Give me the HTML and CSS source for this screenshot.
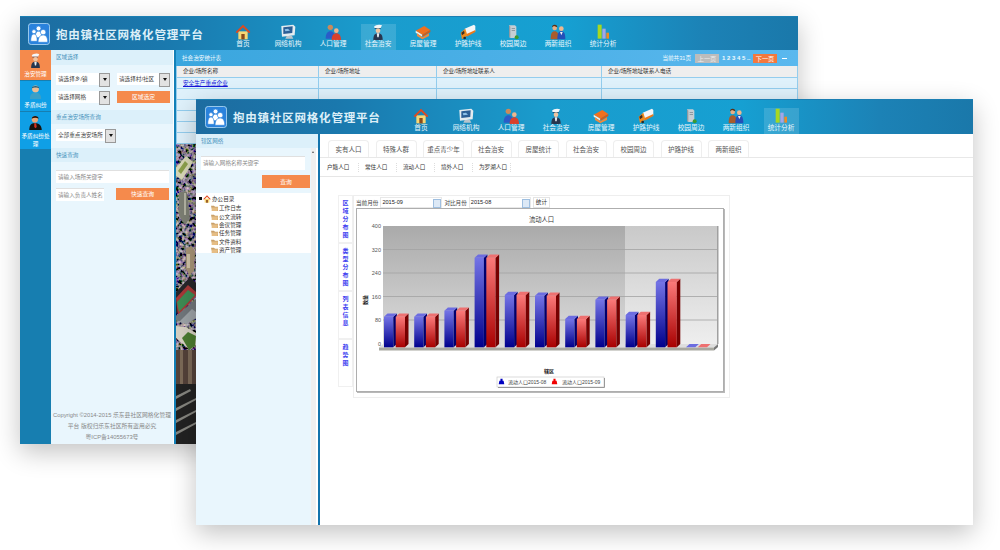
FILE: index.html
```html
<!DOCTYPE html>
<html lang="zh-CN">
<head>
  <meta charset="UTF-8" />
  <title>抱由镇社区网格化管理平台</title>
  <link rel="stylesheet" href="styles.css">
</head>
<body>

  <!-- icon sprites -->
  <svg class="sprites" width="0" height="0">
    <defs>
      <linearGradient id="g-blue" x1="0" y1="0" x2="0" y2="1">
        <stop offset="0" stop-color="#7474e6"/><stop offset="1" stop-color="#00008c"/>
      </linearGradient>
      <linearGradient id="g-red" x1="0" y1="0" x2="0" y2="1">
        <stop offset="0" stop-color="#fb7a7a"/><stop offset="1" stop-color="#a80000"/>
      </linearGradient>
      <linearGradient id="g-wall" x1="0" y1="0" x2="0" y2="1">
        <stop offset="0" stop-color="#aaaaaa"/><stop offset="1" stop-color="#dcdcdc"/>
      </linearGradient>
      <linearGradient id="g-wall2" x1="0" y1="0" x2="0" y2="1">
        <stop offset="0" stop-color="#c9c9c9"/><stop offset="1" stop-color="#eeeeee"/>
      </linearGradient>
      <filter id="speckle" x="0" y="0" width="100%" height="100%">
        <feTurbulence type="fractalNoise" baseFrequency="0.3" numOctaves="2" seed="7"/>
        <feColorMatrix values="1.6 0.2 0 0 -0.68  1.2 0.5 0 0 -0.66  1.2 0 0.6 0 -0.66  0 0 0 0 1"/>
        <feGaussianBlur stdDeviation="0.4"/>
      </filter>
    </defs>
    <symbol id="i-home" viewBox="0 0 24 24">
      <path d="M5 11h14v12H5z" fill="#f7d774"/>
      <path d="M12 1 1 12l2 2 9-9 9 9 2-2z" fill="#e2481c"/>
      <path d="M9.500 15h5v8h-5z" fill="#8a4a1c"/>
    </symbol>
    <symbol id="i-monitor" viewBox="0 0 24 24">
      <path d="M2 3 20 1l3 3-1 13-19 2z" fill="#e4ecf0"/>
      <path d="M5 5l14-1.500-.6 10L5 15z" fill="#2c5f96"/>
      <path d="M7 8l5-1 3 3-7 1z" fill="#8dc1e8"/>
      <path d="M10 18h8l2 4H8z" fill="#b7c4cc"/>
    </symbol>
    <symbol id="i-people" viewBox="0 0 24 24">
      <circle cx="8" cy="5" r="4" fill="#c98a5c"/>
      <path d="M1 22c0-8 3-11 7-11s7 3 7 11z" fill="#2a5cc8"/>
      <circle cx="17" cy="10" r="3.500" fill="#eeb48c"/>
      <path d="M10 24c0-7 3-10 7-10s7 3 7 10z" fill="#d8402c"/>
    </symbol>
    <symbol id="i-police" viewBox="0 0 24 24">
      <path d="M6 4c2-3 9-4 12-2l-2 4H7z" fill="#f4f6f8"/>
      <path d="M7 6h9v1H7z" fill="#1c2c50"/>
      <circle cx="12" cy="10" r="3.500" fill="#f0c4a0"/>
      <path d="M5 24c0-7 2-10 7-10s7 3 7 10z" fill="#27364e"/>
      <path d="M10 14h4l-1 6h-2z" fill="#e8eef2"/>
    </symbol>
    <symbol id="i-books" viewBox="0 0 24 24">
      <path d="M1 10 14 3l9 6-12 7z" fill="#f0701e"/>
      <path d="M1 10l10 6v3L1 13z" fill="#f4f0e8"/>
      <path d="M11 16l12-7v3l-12 7z" fill="#d85a14"/>
      <path d="M3 14l8 6 10-6v4l-10 5-8-5z" fill="#f08a3c"/>
    </symbol>
    <symbol id="i-truck" viewBox="0 0 24 24">
      <path d="M7 7 21 1l2 2v8L10 18z" fill="#f4f6f8"/>
      <path d="M10 15l13-6v3L10 19z" fill="#e87a1c"/>
      <path d="M1 13l7-6 3 10-8 6z" fill="#ee8a1c"/>
      <path d="M2 13l4-3 1 4-4 3z" fill="#3a3026"/>
      <circle cx="7" cy="21" r="2" fill="#2a2a2a"/>
    </symbol>
    <symbol id="i-server" viewBox="0 0 24 24">
      <path d="M6 2h9l2 2v17H8l-2-2z" fill="#c5ced4"/>
      <path d="M6 2l2 2v17l-2-2z" fill="#8e9aa2"/>
      <path d="M10 6h5v1h-5zM10 9h5v1h-5z" fill="#7c8890"/>
      <circle cx="17.500" cy="20" r="3" fill="#3c9a30"/>
    </symbol>
    <symbol id="i-couple" viewBox="0 0 24 24">
      <circle cx="7" cy="6" r="3.500" fill="#e8ae84"/>
      <path d="M7 1c-3 0-4 2-4 4l3-2 5 2c0-2-1-4-4-4z" fill="#5a3014"/>
      <path d="M1 23c0-9 2-12 6-12s6 3 6 12z" fill="#a85c2c"/>
      <circle cx="17" cy="7" r="3.500" fill="#eeb890"/>
      <path d="M11 23c0-9 2-12 6-12s6 3 6 12z" fill="#2450b8"/>
      <path d="M15 12h4l-2 5z" fill="#f4f4f4"/>
    </symbol>
    <symbol id="i-bars" viewBox="0 0 24 24">
      <path d="M4 1h6v21H4z" fill="#a8d820"/>
      <path d="M11 7h5v15h-5z" fill="#a4a6e6"/>
      <path d="M17 13h4v9h-4z" fill="#ee8a24"/>
    </symbol>
    <symbol id="i-person" viewBox="0 0 24 24">
      <circle cx="12" cy="8" r="5.500" fill="#eebd94"/>
      <path d="M6 7c0-5 12-5 12 0-3-2-9-2-12 0z" fill="#1d5f80"/>
      <path d="M3 24c0-7 3-10 9-10s9 3 9 10z" fill="#3aa0c8"/>
    </symbol>
    <symbol id="i-boss" viewBox="0 0 24 24">
      <circle cx="11" cy="7" r="5" fill="#eaa878"/>
      <path d="M6 6c0-6 11-6 11 0-3-2-8-2-11 0z" fill="#221008"/>
      <path d="M2 24c0-8 3-11 9-11s11 3 11 11z" fill="#17130f"/>
      <path d="M10 13h3l1 6-2 2-2-2z" fill="#d8301c"/>
    </symbol>
    <symbol id="i-logo" viewBox="0 0 24 24">
      <rect x="0.500" y="0.500" width="23" height="23" rx="3" fill="#2a82dc" stroke="#a8d4f2"/>
      <g fill="#fff" stroke="#2a82dc" stroke-width="0.700">
        <circle cx="11.500" cy="6" r="2.600"/>
        <path d="M8 16c0-5 1-7 3.500-7s3.500 2 3.500 7z"/>
        <circle cx="6.500" cy="9.500" r="2.300"/>
        <path d="M3 20c0-5 1-8 3.500-8s3.500 3 3.500 8z"/>
        <circle cx="16.500" cy="10" r="3"/>
        <path d="M11 21c0-5 2-8 5.500-8s5 3 5 8z"/>
      </g>
    </symbol>
    <symbol id="i-folder" viewBox="0 0 12 10">
      <path d="M0 1h5l2 2h5v7H2z" fill="#c9a06a"/>
      <path d="M2 4h10l-1 6H1z" fill="#e6bd84"/>
    </symbol>
    <symbol id="i-legend" viewBox="0 0 10 10">
      <path d="M3.500 1h3v3H8l1 5H1l1-5h1.500z"/>
    </symbol>
  </svg>

  <!-- back window -->
  <section class="window window-back">
    <header class="topbar">
      <div class="brand brand-back">
        <svg class="logo"><use href="#i-logo"/></svg>
        <h1>抱由镇社区网格化管理平台</h1>
      </div>
      <nav class="mainnav">
        <a><svg><use href="#i-home"/></svg>首页</a>
        <a><svg><use href="#i-monitor"/></svg>网络机构</a>
        <a><svg><use href="#i-people"/></svg>人口管理</a>
        <a class="active"><svg><use href="#i-police"/></svg>社会治安</a>
        <a><svg><use href="#i-books"/></svg>房屋管理</a>
        <a><svg><use href="#i-truck"/></svg>护路护线</a>
        <a><svg><use href="#i-server"/></svg>校园周边</a>
        <a><svg><use href="#i-couple"/></svg>两新组织</a>
        <a><svg><use href="#i-bars"/></svg>统计分析</a>
      </nav>
    </header>
    <div class="window-body">
      <aside class="rail">
        <a class="rail-on"><svg><use href="#i-police"/></svg>治安管理</a>
        <a><svg><use href="#i-person"/></svg>矛盾纠纷</a>
        <a class="rail-tall"><svg><use href="#i-boss"/></svg>矛盾纠纷处理</a>
      </aside>
      <div class="filters">
        <h3 class="panel-head">区域选择</h3>
        <div class="filter-grid">
          <div class="fake-select">请选择乡/镇</div>
          <div class="fake-select">请选择村/社区</div>
          <div class="fake-select">请选择网格</div>
          <button class="btn">区域选定</button>
        </div>
        <h3 class="panel-head">重点治安场所查询</h3>
        <div class="filter-one">
          <div class="fake-select">全部重点治安场所</div>
        </div>
        <h3 class="panel-head">快速查询</h3>
        <div class="filter-search">
          <div class="field">请输入场所关键字</div>
          <div class="field-row">
            <div class="field">请输入负责人姓名</div>
            <button class="btn">快速查询</button>
          </div>
        </div>
        <footer class="copyright">
          <p>Copyright ©2014-2015 乐东县社区网格化管理</p>
          <p>平台 版权归乐东社区所有盗用必究</p>
          <p>粤ICP备14055673号</p>
        </footer>
      </div>
      <div class="stats">
        <div class="stats-bar">
          <span class="stats-title">社会治安统计表</span>
          <div class="pager">
            <span>当前共31页</span>
            <b class="page-btn">上一页</b>
            <span class="page-nums">1 2 3 4 5 ..</span>
            <b class="page-btn page-next">下一页</b>
            <i class="page-min"></i>
          </div>
        </div>
        <table class="stats-table">
          <tr><th>企业/场所名称</th><th>企业/场所地址</th><th>企业/场所地址联系人</th><th>企业/场所地址联系人电话</th></tr>
          <tr><td><a href="#">安全生产重点企业</a></td><td></td><td></td><td></td></tr>
          <tr><td></td><td></td><td></td><td></td></tr>
          <tr><td></td><td></td><td></td><td></td></tr>
          <tr><td></td><td></td><td></td><td></td></tr>
          <tr><td></td><td></td><td></td><td></td></tr>
          <tr><td></td><td></td><td></td><td></td></tr>
        </table>
        <svg class="map" width="30" height="300">
          <rect width="30" height="300" fill="#2c2c2c"/>
          <rect width="30" height="206" filter="url(#speckle)"/>
          <path d="M0 24 10 12l7 6L6 36 0 32z" fill="#d8d8b8"/>
          <path d="M2 27 9 17l3 3-7 10z" fill="#8ca04c"/>
          <path d="M3 48h8l3 26-5 7-6-9z" fill="#7d7f74"/>
          <path d="M8 49h2v22H8z" fill="#b4b4a4"/>
          <path d="M10 105l5-3 4 5-1 20-5 4-3-6z" fill="#a99678"/>
          <path d="M11 110h3v14h-3z" fill="#d0c4a8"/>
          <path d="M0 148 14 133l6 6v12L0 170z" fill="#26262a"/>
          <path d="M0 154 12 141l8 7v4L2 172z" fill="#a83838"/>
          <path d="M1 158 12 146l7 5L3 168z" fill="#3e8c54"/>
          <path d="M0 172 20 155v20l-12 4-8-3z" fill="#71777c"/>
          <path d="M3 178 16 165l4 3v6l-10 6z" fill="#9ea4a8"/>
          <path d="M0 182l10 1 10 6v12l-6 5-14-12z" fill="#d8d2c4"/>
          <path d="M6 194l6-6 8 4-1 10-6 4z" fill="#4c7c30"/>
          <path d="M0 206h20v34H0z" fill="#54423a"/>
          <path d="M4 206h3v34H4zM12 206h4v34h-4z" fill="#7c6a58"/>
          <path d="M0 240h20v60H0z" fill="#222"/>
          <path d="M0 252l14-7 1 2-15 8zM0 264l20-10v2L0 267zM0 276l20-10v2L0 279zM0 288l20-10v2L0 291z" fill="#85857f"/>
        </svg>
      </div>
    </div>
  </section>

  <!-- front window -->
  <section class="window window-front">
    <header class="topbar topbar-front">
      <div class="brand brand-front">
        <svg class="logo"><use href="#i-logo"/></svg>
        <h1>抱由镇社区网格化管理平台</h1>
      </div>
      <nav class="mainnav">
        <a><svg><use href="#i-home"/></svg>首页</a>
        <a><svg><use href="#i-monitor"/></svg>网络机构</a>
        <a><svg><use href="#i-people"/></svg>人口管理</a>
        <a><svg><use href="#i-police"/></svg>社会治安</a>
        <a><svg><use href="#i-books"/></svg>房屋管理</a>
        <a><svg><use href="#i-truck"/></svg>护路护线</a>
        <a><svg><use href="#i-server"/></svg>校园周边</a>
        <a><svg><use href="#i-couple"/></svg>两新组织</a>
        <a class="active"><svg><use href="#i-bars"/></svg>统计分析</a>
      </nav>
    </header>
    <div class="window-body">
      <aside class="grid-panel">
        <h3 class="panel-head">辖区网络</h3>
        <div class="grid-inner">
          <div class="grid-content">
            <div class="field grid-field">请输入网格名称关键字</div>
            <button class="btn btn-find">查询</button>
            <ul class="tree">
              <li class="tree-root"><i class="tree-arrow"></i><svg><use href="#i-home"/></svg>办公目录</li>
              <li><svg><use href="#i-folder"/></svg>工作日志</li>
              <li><svg><use href="#i-folder"/></svg>公文流转</li>
              <li><svg><use href="#i-folder"/></svg>会议管理</li>
              <li><svg><use href="#i-folder"/></svg>任务管理</li>
              <li><svg><use href="#i-folder"/></svg>文件资料</li>
              <li><svg><use href="#i-folder"/></svg>资产管理</li>
            </ul>
          </div>
          <div class="scroll-track"><i></i></div>
        </div>
      </aside>
      <main class="report-main">
        <div class="tabs">
          <a>实有人口</a><a>特殊人群</a><a>重点青少年</a><a>社会治安</a><a>房屋统计</a>
          <a>社会治安</a><a>校园周边</a><a>护路护线</a><a>两新组织</a>
        </div>
        <div class="subtabs">
          <a>户籍人口</a><a>常住人口</a><a>流动人口</a><a>境外人口</a><a>为罗湖人口</a>
        </div>
        <div class="report">
          <div class="side-tabs">
            <a>区域分布图</a><a>类型分布图</a><a>列表信息</a><a>趋势图</a>
          </div>
          <div class="report-card">
            <div class="month-row">
              <span>当前月份</span><div class="month-input">2015-09</div>
              <span>对比月份</span><div class="month-input">2015-08</div>
              <span class="month-btn">统计</span>
            </div>
            <div class="chart-frame">
              <svg class="chart" width="366" height="182" viewBox="357 209 366 182">
                <text class="chart-title" x="541.500" y="221.500">流动人口</text>
                <rect x="383" y="226" width="242" height="118" fill="url(#g-wall)"/>
                <rect x="625" y="226" width="92" height="118" fill="url(#g-wall2)"/>
                <path d="M717 226h1.500v118H717z" fill="#a0a0a0"/>
                <path d="M383 249.500h334M383 273h334M383 296.500h334M383 320h334" stroke="#a2a2a2" stroke-width="0.800"/>
                <path d="M383 344h335l-4 3.500H379z" fill="#dedede"/>
                <path d="M379 347.500h335v3H379z" fill="#a8a8a0"/>
                <path d="M714 347.500l4-3.500v3l-4 3.500z" fill="#777"/>
                <g class="axis">
                  <text x="381" y="228">400</text>
                  <text x="381" y="251.500">320</text>
                  <text x="381" y="275">240</text>
                  <text x="381" y="298.500">160</text>
                  <text x="381" y="322">80</text>
                  <text x="381" y="345.500">0</text>
                </g>
                <g id="bars"></g>
                <text class="axis-name" transform="translate(367 300) rotate(-90)">数量</text>
                <text class="axis-name" x="549" y="373">辖区</text>
                <rect x="497" y="377" width="107" height="10" fill="#fff" stroke="#c4c4c4" stroke-width="0.600"/>
                <path d="M604.500 378v9.500H498" fill="none" stroke="#999"/>
                <svg x="498" y="378" width="7" height="7" fill="#0000c0"><use href="#i-legend"/></svg>
                <text class="legend-text" x="508" y="383.800">流动人口2015-08</text>
                <svg x="551" y="378" width="7" height="7" fill="#f00000"><use href="#i-legend"/></svg>
                <text class="legend-text" x="562" y="383.800">流动人口2015-09</text>
              </svg>
            </div>
          </div>
        </div>
      </main>
    </div>
  </section>

  <script src="chart.js"></script>
</body>
</html>
```

FILE: styles.css
```css
* { box-sizing: border-box; margin: 0; padding: 0; }

body {
  width: 1000px;
  height: 550px;
  position: relative;
  overflow: hidden;
  background: #fff;
  font-family: 'Liberation Sans', 'Noto Sans CJK SC', sans-serif;
  font-size: 5.600px;
  color: #444;
}

.sprites { position: absolute; }

/* the two windows float on the page */
.window {
  position: absolute;
  display: flex;
  flex-direction: column;
  background: #fff;
  box-shadow: 0 8px 24px rgba(0,0,0,0.24);
}

.window-back { left: 20px; top: 16px; width: 778px; height: 428px; }
.window-front { left: 196px; top: 99px; width: 777px; height: 426px; }

.window-body { display: flex; flex: 1; min-height: 0; }

.topbar {
  display: flex;
  align-items: flex-end;
  height: 34px;
  flex: none;
  background: linear-gradient(90deg, #1d6ca0 0, #1a78ad 18%, #1a9ccd 45%, #16a0d2 70%, #1c82b6 88%, #1a78aa 100%);
  border-top: 1px solid #1b7fb3;
}

.topbar-front { height: 35px; }

.brand {
  display: flex;
  align-items: center;
  align-self: center;
  flex: none;
}

.brand-back { width: 205.500px; padding-left: 8px; }
.brand-front { width: 207.500px; padding-left: 9px; }

.logo { width: 22px; height: 22px; }

.brand h1 {
  margin-left: 6px;
  font-size: 11.500px;
  font-weight: bold;
  letter-spacing: 0.800px;
  white-space: nowrap;
  color: #dceff8;
}

.mainnav { display: flex; gap: 10px; }

.mainnav a {
  width: 35px;
  height: 26px;
  display: flex;
  flex-direction: column;
  align-items: center;
  font-size: 6.700px;
  white-space: nowrap;
  line-height: 8px;
  color: #eaf6fc;
}

.mainnav svg { width: 16px; height: 16px; flex: none; }

.mainnav a.active { background: rgba(255,255,255,0.14); }

/* back window: left rail */
.rail {
  width: 31px;
  flex: none;
  background: #177eb0;
  color: #fff;
  text-align: center;
}

.rail a {
  display: flex;
  flex-direction: column;
  align-items: center;
  height: 30px;
  padding-top: 3px;
  margin-bottom: 1px;
  background: #0f9fe6;
  line-height: 8px;
}

.rail svg { width: 15px; height: 15px; flex: none; margin-bottom: 2px; }

.rail a.rail-on { background: #f58a4c; }
.rail a.rail-tall { height: 37px; }

/* back window: filter column */
.filters {
  width: 122px;
  flex: none;
  display: flex;
  flex-direction: column;
  background: #e9f6fd;
}

.panel-head {
  height: 14px;
  flex: none;
  padding-left: 5px;
  background: #dcf0fa;
  font-size: 5.600px;
  font-weight: normal;
  line-height: 14px;
  color: #4a94bd;
}

.filters .panel-head:first-child { height: 15px; }

.filter-grid {
  display: grid;
  grid-template-columns: 54px 53px;
  column-gap: 7px;
  row-gap: 6px;
  padding: 8px 0 7px 5px;
}

.filter-one { padding: 5px 0 7px 5px; }

.fake-select {
  position: relative;
  height: 12px;
  padding-left: 2px;
  background: #fff;
  line-height: 12px;
  white-space: nowrap;
  color: #444;
}

.fake-select::after {
  content: "";
  position: absolute;
  right: 0;
  top: 0;
  width: 9px;
  height: 12px;
  border: 1px solid #999;
  background: #e2e2e2;
}

.fake-select::before {
  content: "";
  position: absolute;
  z-index: 1;
  right: 3px;
  top: 5px;
  border: 2px solid transparent;
  border-top: 3px solid #111;
  border-bottom: 0;
}

.filter-one .fake-select { width: 60px; }

.btn {
  height: 12px;
  border: 0;
  background: #f58a4c;
  font: inherit;
  font-size: 5.800px;
  line-height: 12px;
  color: #fff;
}

.filter-search { padding: 8px 4px 0 5px; }

.field {
  height: 13px;
  padding-left: 2px;
  background: #fff;
  border-top: 1px solid #e0e0e0;
  line-height: 12px;
  white-space: nowrap;
  color: #888;
}

.field-row {
  display: flex;
  justify-content: space-between;
  margin-top: 5px;
}

.field-row .field { width: 48px; }
.field-row .btn { width: 53px; }

.copyright {
  margin-top: auto;
  padding-bottom: 1.500px;
  font-size: 5.800px;
  text-align: center;
  line-height: 11px;
  white-space: nowrap;
  color: #888;
}

/* back window: table area */
.stats {
  flex: 1;
  min-width: 0;
  display: flex;
  flex-direction: column;
  border-left: 1px solid #fff;
  box-shadow: inset 2px 0 0 #1380b8;
  padding-left: 2px;
}

.stats-bar {
  display: flex;
  justify-content: space-between;
  align-items: center;
  height: 16px;
  flex: none;
  padding: 0 11px 0 6px;
  background: linear-gradient(90deg, #3aa6de, #5ab8ee);
  color: #f2fafe;
}

.pager { display: flex; align-items: center; gap: 3px; }

.page-btn {
  width: 24px;
  height: 9px;
  margin-left: 1px;
  background: #bcbcbc;
  font-size: 6.200px;
  font-weight: normal;
  line-height: 9px;
  text-align: center;
  color: #eee;
}

.page-next { background: #f5783c; color: #fff; }
.page-nums { font-size: 6px; font-weight: bold; width: 27px; white-space: nowrap; }
.page-min { width: 5px; height: 1px; margin-left: 2px; background: #fff; }

.stats-table {
  width: 100%;
  flex: none;
  table-layout: fixed;
  border-collapse: collapse;
}

.stats-table th, .stats-table td {
  height: 11px;
  padding: 0 0 0 6px;
  border: 1px solid #93cdee;
  border-top: 0;
  text-align: left;
  font-weight: normal;
  line-height: 10px;
  overflow: hidden;
  white-space: nowrap;
}

.stats-table th { background: #eeeeee; color: #333; }
.stats-table td { background: #dff1fb; }
.stats-table a { color: #1414d8; }

.stats-table th:nth-child(1) { width: 142px; }
.stats-table th:nth-child(2) { width: 118px; }
.stats-table th:nth-child(3) { width: 165px; }

.map { display: block; flex: none; }

/* front window: grid tree */
.grid-panel {
  width: 124px;
  flex: none;
  display: flex;
  flex-direction: column;
  border-right: 2px solid #1373ac;
  background: #e9f6fd;
}

.grid-inner { display: flex; flex: 1; }
.grid-content { flex: 1; padding-top: 8px; }

.grid-field { width: 104px; height: 14px; margin-left: 5px; line-height: 13px; }

.btn-find {
  display: block;
  width: 48px;
  height: 13px;
  margin: 5px 1px 0 auto;
}

.scroll-track {
  width: 7px;
  flex: none;
  padding-top: 3px;
  background: #efefef;
  border-right: 2px solid #fff;
}

.scroll-track i {
  display: block;
  width: 0;
  margin-left: 1px;
  border: 1.500px solid transparent;
  border-top: 0;
  border-bottom: 2px solid #555;
}

.tree {
  height: 60px;
  margin-top: 5px;
  padding-top: 1px;
  list-style: none;
  background: #fff;
  color: #333;
}

.tree li {
  display: flex;
  align-items: center;
  height: 8.400px;
  padding-left: 15px;
  white-space: nowrap;
}

.tree li svg { width: 7px; height: 6px; margin-right: 1px; }

.tree .tree-root { height: 9px; padding-left: 3px; margin-bottom: 1px; }
.tree .tree-root svg { width: 8px; height: 8px; margin-right: 1px; }

.tree-arrow {
  width: 3px;
  height: 3px;
  margin-right: 1px;
  background: #111;
}

/* front window: report */
.report-main { flex: 1; min-width: 0; }

.tabs {
  display: flex;
  gap: 6.500px;
  height: 24px;
  padding: 6px 0 0 8px;
  border-bottom: 1px solid #e8e8e8;
}

.tabs a {
  width: 41px;
  height: 17px;
  border: 1px solid #eeeeee;
  border-bottom: 0;
  border-radius: 4px 4px 0 0;
  font-size: 6.500px;
  line-height: 17px;
  text-align: center;
  color: #555;
}

.subtabs {
  display: flex;
  height: 19px;
  padding-left: 7px;
  border-bottom: 1px solid #e6e6e6;
  line-height: 18px;
}

.subtabs a {
  position: relative;
  width: 38px;
  white-space: nowrap;
  color: #333;
}

.subtabs a::after {
  content: "";
  position: absolute;
  right: 6px;
  top: 5px;
  height: 9px;
  border-right: 1px dotted #ddd;
}

.report { display: flex; padding: 18px 0 0 18px; }

.side-tabs { width: 15px; flex: none; }

.side-tabs a {
  display: block;
  height: 48px;
  padding: 4px 1px 0 0;
  border: 1px solid #f0f0f0;
  writing-mode: vertical-rl;
  text-orientation: upright;
  font-size: 6px;
  font-weight: bold;
  letter-spacing: 2px;
  line-height: 12px;
  color: #4040f0;
}

.report-card {
  width: 377px;
  height: 203px;
  padding: 1px 0 0 2px;
  border: 1px solid #eeeeee;
}

.month-row {
  display: flex;
  align-items: center;
  gap: 2px;
  height: 11px;
  white-space: nowrap;
  color: #444;
}

.month-input {
  position: relative;
  width: 62px;
  height: 11px;
  padding-left: 1px;
  border: 1px solid #e8e8e8;
  line-height: 9px;
  color: #222;
}

.month-input::after {
  content: "";
  position: absolute;
  right: 0;
  top: 1px;
  width: 6px;
  height: 7px;
  border: 1px solid #9fbfe0;
  background: #dde9f6;
}

.month-btn {
  height: 11px;
  padding: 0 2px;
  border: 1px solid #e4e4e4;
  line-height: 9px;
  color: #333;
}

.chart-frame {
  width: 368px;
  height: 184px;
  border: 1px solid #aeaeae;
  box-shadow: 1px 1px 0 #b8b8b8;
}

.chart { display: block; font-family: 'Liberation Sans', 'Noto Sans CJK SC', sans-serif; }

.chart-title { font-size: 6.300px; fill: #333; text-anchor: middle; }
.axis text { font-size: 5.500px; fill: #555; text-anchor: end; }
.axis-name { font-size: 5px; font-weight: bold; fill: #222; text-anchor: middle; }
.legend-text { font-size: 5px; fill: #444; }
```

FILE: chart.js
```js
// 3D 柱状图，数值是柱顶的 y 坐标
const tops = [316.7, 316.7, 310.7, 257.7, 295, 295.7, 319, 299.7, 315, 282, 347.3];
const baseY = 347.3;
const barW = 9.3;
const bars = document.getElementById("bars");

function shape(tag, attrs) {
  const el = document.createElementNS("http://www.w3.org/2000/svg", tag);
  Object.keys(attrs).forEach(k => el.setAttribute(k, attrs[k]));
  bars.appendChild(el);
}

function drawBar(x, top, colors) {
  const h = baseY - top;
  if (h > 0) {
    shape("rect", { x: x, y: top, width: barW, height: h, fill: colors.front });
    shape("polygon", {
      points: `${x + barW},${top} ${x + barW + 3.5},${top - 3.2} ${x + barW + 3.5},${baseY - 3.2} ${x + barW},${baseY}`,
      fill: colors.side
    });
  }
  shape("polygon", {
    points: `${x},${top} ${x + 3.5},${top - 3.2} ${x + barW + 3.5},${top - 3.2} ${x + barW},${top}`,
    fill: colors.cap
  });
}

tops.forEach((top, i) => {
  const x = 384 + 30.2 * i;
  drawBar(x, top, { front: "url(#g-blue)", side: "#00006e", cap: "#6c6ce0" });
  drawBar(x + 11.7, top, { front: "url(#g-red)", side: "#760000", cap: "#ee7070" });
});
```
